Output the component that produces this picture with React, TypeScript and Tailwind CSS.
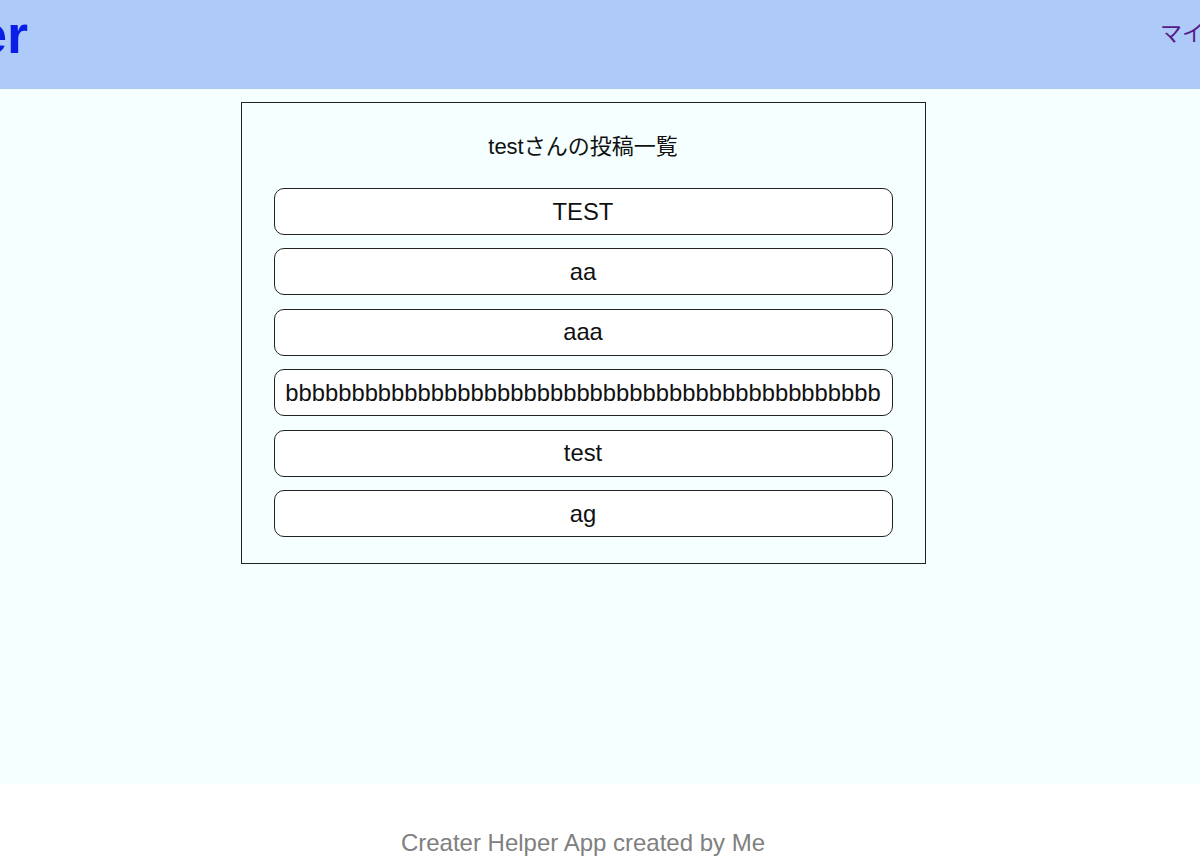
import React from "react";

const posts = [
  "TEST",
  "aa",
  "aaa",
  "b".repeat(45),
  "test",
  "ag",
];

export default function App() {
  return (
    <div className="min-h-[866px] bg-white text-black">
      <div className="font-['Liberation_Sans','Noto_Sans_CJK_JP',sans-serif]">
        <header className="h-[89px] bg-[#aecaf9] overflow-hidden flex items-start pt-[4px]">
          <div className="w-[28px] shrink-0 flex justify-end whitespace-nowrap">
            <span className="text-[54px] font-bold leading-[60px] text-[#0a1ee6]">
              Creater Helper
            </span>
          </div>
          <div className="ml-[1132px] shrink-0 whitespace-nowrap text-[22px] leading-[60px] text-[#551a8b]">
            マイページ
          </div>
        </header>
        <main className="h-[695px] bg-[#f5ffff] w-full">
          <div className="w-[1166px] pt-[13px]">
            <div className="mx-auto w-[685px] border border-[#222] pt-[29px] pb-[26px] flex flex-col items-center">
              <h2 className="text-[22px] leading-[30px] text-[#111]">testさんの投稿一覧</h2>
              <div className="mt-[26px] flex flex-col gap-[13.4px] w-[619px]">
                {posts.map((p, i) => (
                  <div
                    key={i}
                    className="h-[47px] rounded-[10px] border border-[#222] bg-white flex items-center justify-center px-[6px] text-[23.8px] text-[#111] whitespace-nowrap overflow-visible"
                  >
                    {p}
                  </div>
                ))}
              </div>
            </div>
          </div>
        </main>
        <footer className="w-[1166px] h-[82px] flex items-end justify-center pb-[8px]">
          <span className="text-[24px] leading-[30px] text-[#808080]">
            Creater Helper App created by Me
          </span>
        </footer>
      </div>
    </div>
  );
}
